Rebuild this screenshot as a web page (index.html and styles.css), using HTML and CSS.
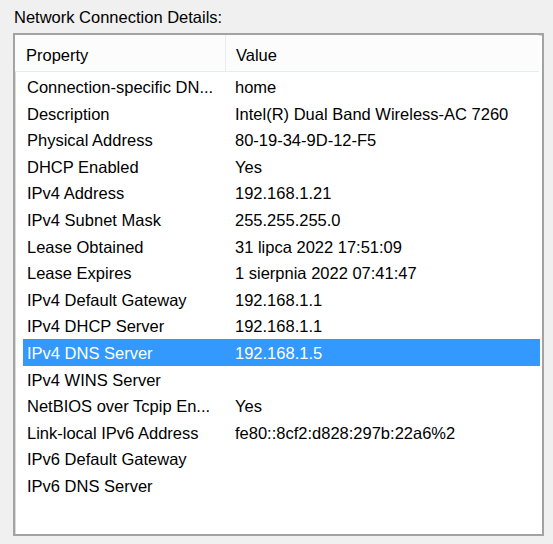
FILE: index.html
```
<!DOCTYPE html>
<html lang="en">
<head>
<meta charset="UTF-8" />
<meta name="viewport" content="width=device-width, initial-scale=1" />
<title>Network Connection Details</title>
<link rel="stylesheet" href="styles.css">
</head>
<body>

<div class="title">Network Connection Details:</div>

<div class="list">
  <div class="head">
    <div class="col first">Property</div>
    <div class="col">Value</div>
  </div>

  <div class="rows">
    <div class="row"><span class="prop">Connection-specific DN...</span><span class="val">home</span></div>
    <div class="row"><span class="prop">Description</span><span class="val">Intel(R) Dual Band Wireless-AC 7260</span></div>
    <div class="row"><span class="prop">Physical Address</span><span class="val">80-19-34-9D-12-F5</span></div>
    <div class="row"><span class="prop">DHCP Enabled</span><span class="val">Yes</span></div>
    <div class="row"><span class="prop">IPv4 Address</span><span class="val">192.168.1.21</span></div>
    <div class="row"><span class="prop">IPv4 Subnet Mask</span><span class="val">255.255.255.0</span></div>
    <div class="row"><span class="prop">Lease Obtained</span><span class="val">31 lipca 2022 17:51:09</span></div>
    <div class="row"><span class="prop">Lease Expires</span><span class="val">1 sierpnia 2022 07:41:47</span></div>
    <div class="row"><span class="prop">IPv4 Default Gateway</span><span class="val">192.168.1.1</span></div>
    <div class="row"><span class="prop">IPv4 DHCP Server</span><span class="val">192.168.1.1</span></div>
    <div class="row selected"><span class="prop">IPv4 DNS Server</span><span class="val">192.168.1.5</span></div>
    <div class="row"><span class="prop">IPv4 WINS Server</span><span class="val"></span></div>
    <div class="row"><span class="prop">NetBIOS over Tcpip En...</span><span class="val">Yes</span></div>
    <div class="row"><span class="prop">Link-local IPv6 Address</span><span class="val">fe80::8cf2:d828:297b:22a6%2</span></div>
    <div class="row"><span class="prop">IPv6 Default Gateway</span><span class="val"></span></div>
    <div class="row"><span class="prop">IPv6 DNS Server</span><span class="val"></span></div>
  </div>
</div>

</body>
</html>
```

FILE: styles.css
```
* { box-sizing: border-box; }
body { margin: 0; background: #f0f0f0; font-family: "Liberation Sans", Arial, sans-serif; font-size: 16.5px; color: #000; }

.title { padding: 7px 0 0 14px; line-height: 20px; height: 27px; }

.list { margin: 6px 0 0 13px; width: 531px; height: 503px; background: #fff; border: 2px solid #a3a3a3; box-shadow: inset 1px 1px 0 #d9d9d9; }

.head { display: flex; height: 37px; margin-right: 3px; background: #fcfcfd; border-bottom: 1px solid #e3ecf6; }
.head .col { line-height: 20px; padding: 10px 0 0 10px; }
.head .first { width: 211px; padding-left: 11px; border-right: 1px solid #e6ecf3; }

.rows { padding: 1px 2px 0 8px; }
.row { display: flex; height: 26.6px; line-height: 24.6px; padding-top: 2px; white-space: nowrap; }
.row .prop { width: 203px; padding-left: 4px; }
.row .val { padding-left: 9px; }
.row.selected { background: #3399ff; color: #fff; }
```
